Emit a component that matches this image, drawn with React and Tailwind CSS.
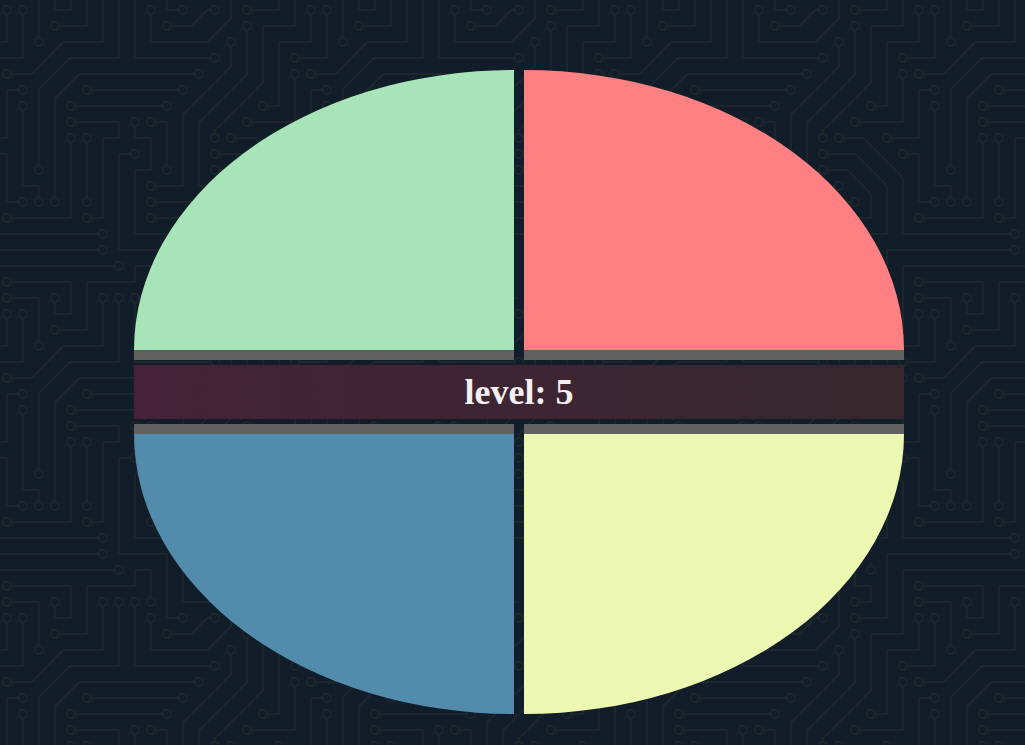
// circuit board background, one 304x304 tile. Lines may run past the tile edge, they get drawn again shifted.
const LINES = [
  'M7 10V42H-25V106H-41',
  'M23 10V58H-9',
  'M39 42V-6H7',
  'M7 -22H71V10H55V-6',
  'M55 26H87V-22H135V-38H151V-6',
  'M39 170V89L70 58H119V-6',
  'M7 74H32L63 42H103V-6',
  'M55 202V98L79 74H199',
  'M87 90H183',
  'M71 106H167',
  'M71 122H119V138H103V218H87',
  'M71 138V218H7',
  'M87 138V202',
  'M135 122V138H151V170H135V234H279V186L247 154H215',
  'M135 154H119V250H167V314H183',
  'M135 -6V58H215',
  'M23 106V186H39V202',
  'M23 90H7V138H-25',
  'M-9 154H7V202H23',
  'M151 10V42H207L231 18V-30',
  'M215 10H207L191 26H167',
  'M231 42V66L183 114V186H151',
  'M247 26V74L199 122V186H231',
  'M151 122H167V170',
  'M151 202H247',
  'M151 218H263V194L239 170H215',
  'M215 138V130L263 82V26H295V-38H423',
  'M247 10H279V-54H407',
  'M231 138H255L295 178V234H407',
  'M295 74V122H247',
  'M247 -6H263V-22H247V-40',
  'M263 -38V-46',
  'M183 -40V-6H215',
]

const DOTS = {
  10: [7, 23, 151, 183, 215, 247],
  26: [55, 167, 247],
  42: [39, 231],
  58: [215, 295],
  74: [7, 199, 295],
  90: [23, 87, 183],
  106: [23, 71, 167, 263],
  122: [71, 135, 151, 247],
  138: [71, 87, 215, 231, 279],
  154: [135, 215, 295],
  170: [39, 167, 215],
  186: [151, 231],
  202: [23, 39, 55, 87, 151, 247],
  218: [7, 87, 151],
  234: [103],
  250: [103],
  266: [119, 263],
  282: [7],
  298: [7, 55, 103, 119, 135, 151, 247],
}

const SHIFTS = [
  [0, 0],
  [304, 0],
  [-304, 0],
  [0, 304],
  [0, -304],
  [304, 304],
  [-304, 304],
]

function CircuitBackground() {
  return (
    <svg className="absolute inset-0 h-full w-full" aria-hidden="true">
      <defs>
        <pattern id="circuit" width="304" height="304" patternUnits="userSpaceOnUse">
          {SHIFTS.map(([dx, dy]) => (
            <g key={`${dx}_${dy}`} transform={`translate(${dx} ${dy})`} fill="none" stroke="#20292b" strokeWidth="1.4">
              {LINES.map((d) => (
                <path key={d} d={d} />
              ))}
            </g>
          ))}
          {Object.entries(DOTS).map(([y, xs]) =>
            xs.map((x) => (
              <circle key={`${x}_${y}`} cx={x} cy={y} r="4.2" fill="#111d28" stroke="#20292b" strokeWidth="1.4" />
            ))
          )}
        </pattern>
      </defs>
      <rect width="100%" height="100%" fill="url(#circuit)" />
    </svg>
  )
}

export default function App() {
  return (
    <div className="relative h-screen w-full overflow-hidden bg-[#111d28]">
      <CircuitBackground />

      <div className="relative ml-[134px] flex w-[770px] flex-col pt-[70px]">
        {/* top pads */}
        <div className="flex gap-[10px]">
          <div className="flex-1">
            <div className="h-[280px] rounded-tl-[100%] bg-[#a7e5b9]" />
            <div className="h-[10px] bg-[#606060]" />
          </div>
          <div className="flex-1">
            <div className="h-[280px] rounded-tr-[100%] bg-[#ff8082]" />
            <div className="h-[10px] bg-[#606060]" />
          </div>
        </div>

        {/* level */}
        <div className="my-[5px] flex h-[54px] items-center justify-center bg-gradient-to-r from-[#482238]/95 to-[#37282d]/95 font-['Liberation_Serif',serif] text-[36px] leading-none font-bold text-[#f3f0f3]">
          level: 5
        </div>

        {/* bottom pads */}
        <div className="flex gap-[10px]">
          <div className="flex-1">
            <div className="h-[10px] bg-[#606060]" />
            <div className="h-[280px] rounded-bl-[100%] bg-[#528bab]" />
          </div>
          <div className="flex-1">
            <div className="h-[10px] bg-[#606060]" />
            <div className="h-[280px] rounded-br-[100%] bg-[#ecf7b1]" />
          </div>
        </div>
      </div>
    </div>
  )
}
